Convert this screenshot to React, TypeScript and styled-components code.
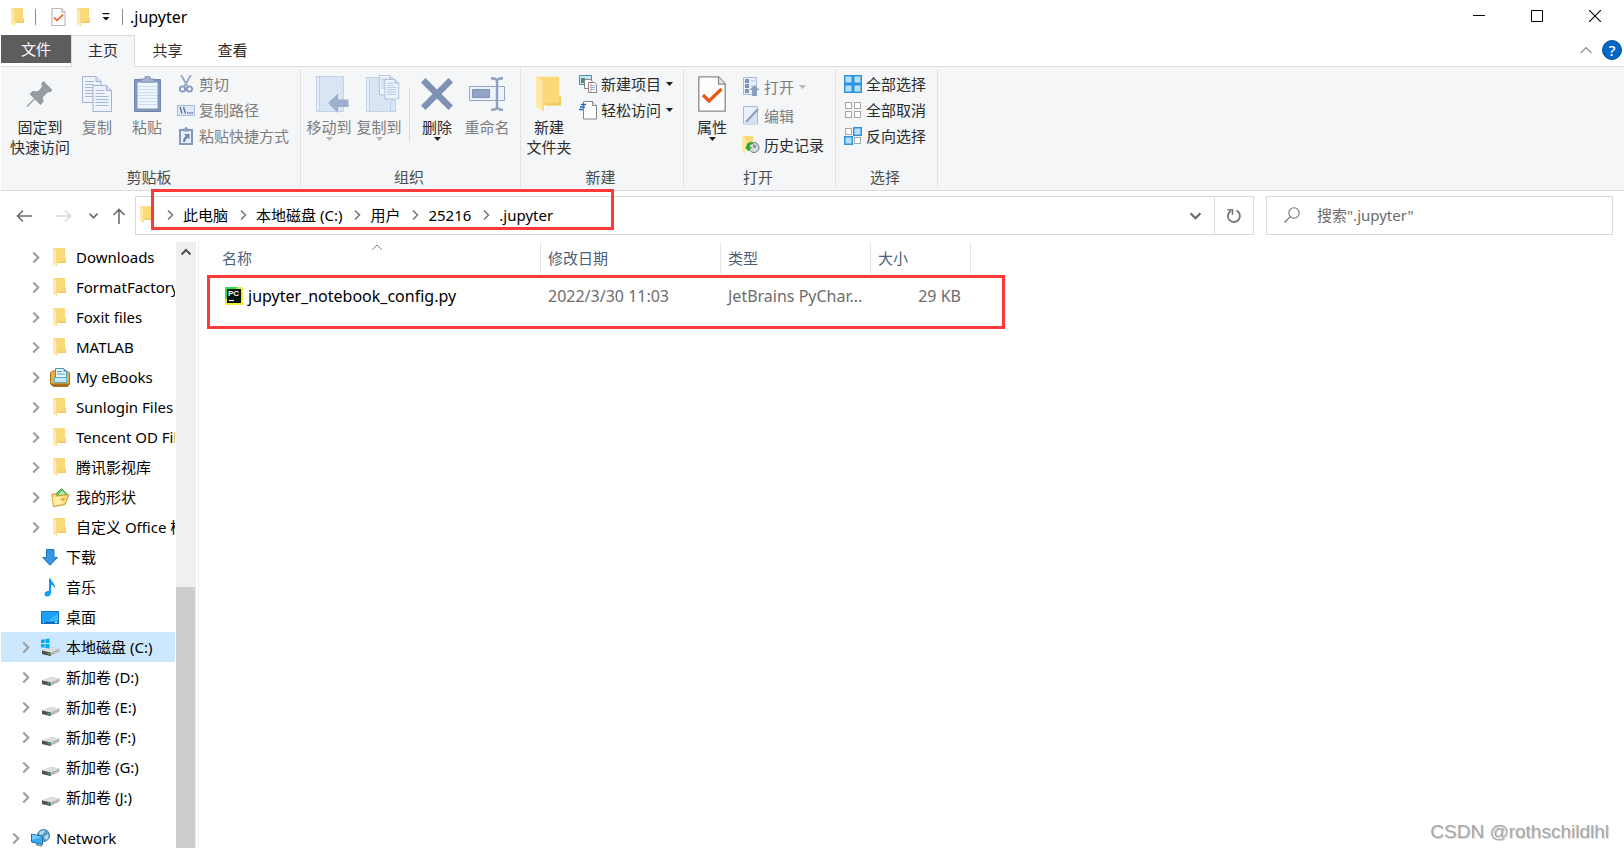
import React from 'react';
import styled, { createGlobalStyle, css } from 'styled-components';

const GlobalStyle = createGlobalStyle`
  *, *::before, *::after { box-sizing: border-box; }
  html, body { margin: 0; padding: 0; background: #fff; }
  body, button, input, table {
    font-family: 'Noto Sans', 'Noto Sans CJK SC', sans-serif;
    font-size: 15px;
    line-height: 20px;
    color: #000;
  }
  button { border: 0; padding: 0; margin: 0; background: transparent; cursor: default; }
  svg { display: block; flex: none; }
`;

const Window = styled.div`
  display: flex;
  flex-direction: column;
  height: 100vh;
  min-width: 1100px;
  overflow: hidden;
  position: relative;
`;

/* Title bar */

const TitleBar = styled.header`
  display: flex;
  align-items: flex-start;
  justify-content: space-between;
  height: 35px;
  flex: none;
  padding-left: 11px;
`;

const QuickAccess = styled.div`
  display: flex;
  align-items: center;
  height: 33px;
`;

const QuickButton = styled.button<{ $gap?: number }>`
  display: flex;
  margin-right: ${p => p.$gap ?? 0}px;
`;

const Separator = styled.span<{ $gap: number }>`
  width: 1px;
  height: 16px;
  background: #8a8a8a;
  margin-right: ${p => p.$gap}px;
`;

const WindowTitle = styled.h1`
  margin: 0;
  font-size: 16px;
  font-weight: 400;
  line-height: 20px;
`;

const WindowControls = styled.div`
  display: flex;
  align-self: stretch;
`;

const ControlButton = styled.button`
  width: 58px;
  height: 32px;
  display: flex;
  align-items: center;
  justify-content: center;
`;

/* Tabs */

const TabBar = styled.nav`
  display: flex;
  align-items: flex-start;
  height: 31px;
  flex: none;
  padding-left: 1px;
`;

const Tab = styled.button<{ $kind?: 'file' | 'active' }>`
  width: 65px;
  height: 30px;
  color: #2b2b2b;
  ${p => p.$kind === 'file' && css`
    width: 70px;
    height: 28px;
    color: #fff;
    background: #5d5d5d;
  `}
  ${p => p.$kind === 'active' && css`
    width: 64px;
    height: 32px;
    padding-bottom: 4px;
    background: #f4f6f8;
    border: 1px solid #dadbdc;
    border-bottom: 0;
    position: relative;
    z-index: 1;
  `}
`;

const TabTools = styled.div`
  display: flex;
  align-items: center;
  gap: 10px;
  height: 30px;
  margin-left: auto;
  padding-right: 2px;
`;

const HelpButton = styled.button`
  width: 20px;
  height: 20px;
  border-radius: 50%;
  background: #0067c9;
  border: 1px solid #0a4f97;
  color: #fff;
  font-weight: 500;
  line-height: 18px;
`;

/* Ribbon */

const Ribbon = styled.section`
  display: flex;
  flex: none;
  height: 125px;
  margin-left: 1px;
  background: #f4f6f8;
  border-top: 1px solid #dadbdc;
  border-bottom: 1px solid #dadbdc;
`;

const Group = styled.section<{ $width: number }>`
  display: flex;
  flex-direction: column;
  justify-content: space-between;
  width: ${p => p.$width}px;
  margin: 2px 0;
  border-right: 1px solid #e0e2e4;
`;

const GroupBody = styled.div<{ $indent: number }>`
  display: flex;
  align-items: flex-start;
  padding-left: ${p => p.$indent}px;
`;

const GroupLabel = styled.h2`
  margin: 0 0 1px;
  padding-right: 3px;
  font-size: 15px;
  font-weight: 400;
  line-height: 20px;
  color: #4c4c4c;
  text-align: center;
`;

const LargeButton = styled.button<{ $width?: number }>`
  display: flex;
  flex-direction: column;
  align-items: center;
  width: ${p => p.$width ?? 50}px;
  padding-top: 7px;
  white-space: nowrap;
  color: #2b2b2b;
  &:disabled { color: #7d7d7d; }
`;

const LargeIcon = styled.span`
  display: flex;
  align-items: center;
  justify-content: center;
  height: 36px;
  margin-bottom: 5px;
`;

const GroupDivider = styled.span`
  width: 1px;
  height: 54px;
  margin: 19px 2px 0 5px;
  background: #dcdee0;
`;

const SmallColumn = styled.div<{ $pitch?: number; $top?: number }>`
  display: grid;
  grid-auto-rows: ${p => p.$pitch ?? 26}px;
  padding-top: ${p => p.$top ?? 2}px;
  margin-left: 4px;
`;

const SmallButton = styled.button`
  display: flex;
  align-items: center;
  gap: 3px;
  white-space: nowrap;
  color: #2b2b2b;
  &:disabled { color: #7d7d7d; }
`;

const SmallIcon = styled.span`
  display: flex;
  justify-content: center;
  width: 20px;
`;

const SmallLabel = styled.span`
  margin-right: 2px;
`;

/* Navigation row */

const NavRow = styled.div`
  display: flex;
  align-items: center;
  flex: none;
  height: 39px;
  margin: 5px 11px 7px 0;
`;

const NavButtons = styled.div`
  display: flex;
  align-items: center;
  width: 135px;
  padding-left: 16px;
`;

const NavButton = styled.button<{ $width: number }>`
  display: flex;
  width: ${p => p.$width}px;
`;

const AddressBar = styled.div`
  display: flex;
  flex: 1;
  height: 39px;
  border: 1px solid #d9d9d9;
`;

const Breadcrumb = styled.nav`
  display: flex;
  align-items: center;
  flex: 1;
  padding: 0 0 2px 4px;
  gap: 4px;
`;

const CrumbTrail = styled.div`
  display: flex;
  align-items: center;
  position: relative;
  padding-left: 8px;
  &::after {
    content: '';
    position: absolute;
    left: -6px;
    top: -16px;
    width: 463px;
    height: 41px;
    border: 3px solid #fd3939;
    pointer-events: none;
  }
`;

const Crumb = styled.a`
  color: #000;
  text-decoration: none;
  margin: 0 10px 0 8px;
  white-space: nowrap;
`;

const AddressButton = styled.button<{ $divided?: boolean }>`
  width: 38px;
  display: flex;
  align-items: center;
  justify-content: center;
  ${p => p.$divided && css`
    width: 39px;
    border-left: 1px solid #d9d9d9;
  `}
`;

const SearchBox = styled.label`
  display: flex;
  align-items: center;
  gap: 17px;
  width: 347px;
  height: 39px;
  margin-left: 12px;
  padding: 0 0 2px 17px;
  border: 1px solid #d9d9d9;
`;

const SearchInput = styled.input`
  flex: 1;
  min-width: 0;
  border: 0;
  padding: 0;
  outline: 0;
  background: transparent;
  &::placeholder { color: #6d6d6d; opacity: 1; }
`;

/* Main area */

const Main = styled.main`
  display: flex;
  flex: 1;
  min-height: 0;
`;

const Tree = styled.ul`
  width: 174px;
  margin: 0 1px;
  padding: 0;
  list-style: none;
  overflow: hidden;
`;

const TreeItem = styled.li<{ $level: number; $selected?: boolean; $spaced?: boolean }>`
  height: 30px;
  margin-top: ${p => (p.$spaced ? 11 : 0)}px;
  padding-left: ${p => 9 + p.$level * 10}px;
  background: ${p => (p.$selected ? '#cce8ff' : 'transparent')};
  overflow: hidden;
`;

const TreeButton = styled.button`
  display: flex;
  align-items: center;
  height: 30px;
  white-space: nowrap;
`;

const TreeChevron = styled.span`
  display: flex;
  width: 20px;
`;

const TreeIcon = styled.span`
  display: flex;
  align-items: center;
  justify-content: center;
  width: 20px;
  margin-right: 6px;
`;

const ScrollTrack = styled.div`
  display: flex;
  flex-direction: column;
  width: 20px;
  background: #f0f0f0;
  margin-right: 2px;
`;

const ScrollUp = styled.button`
  display: flex;
  align-items: center;
  justify-content: center;
  height: 20px;
  flex: none;
`;

const ScrollGap = styled.div`
  flex: 325;
`;

const ScrollThumb = styled.div`
  flex: 261;
  background: #cdcdcd;
  margin-right: 1px;
`;

const FilePane = styled.section`
  flex: 1;
  border-left: 1px solid #f0f0f0;
  padding-left: 8px;
`;

const FileList = styled.div`
  position: relative;
  width: 800px;
`;

const Highlight = styled.div`
  position: absolute;
  left: 0;
  top: 33px;
  width: 798px;
  height: 54px;
  border: 3px solid #fd3939;
  pointer-events: none;
`;

const FileTable = styled.table`
  table-layout: fixed;
  border-collapse: separate;
  border-spacing: 0;
  width: 764px;
`;

const HeadCell = styled.th`
  position: relative;
  height: 32px;
  padding: 0 0 0 7px;
  border-right: 1px solid #e5e5e5;
  text-align: left;
  font-weight: 400;
  &:first-child { padding-left: 15px; }
`;

const HeadButton = styled.button`
  color: #4c607a;
`;

const SortMark = styled.span`
  position: absolute;
  left: 165px;
  top: 0;
`;

const Cell = styled.td<{ $align?: 'right' }>`
  height: 44px;
  padding: 0 10px 0 7px;
  font-size: 16px;
  color: #6d6d6d;
  text-align: ${p => p.$align ?? 'left'};
  white-space: nowrap;
  &:first-child { padding-right: 0; }
`;

const FileName = styled.span`
  display: flex;
  align-items: center;
  gap: 5px;
  padding-left: 11px;
  color: #000;
`;

const Watermark = styled.div`
  position: absolute;
  right: 15px;
  bottom: 5px;
  font-family: 'Liberation Sans', sans-serif;
  font-size: 19px;
  line-height: 22px;
  color: #a6a6a6;
  text-shadow: 1px 1px 0 #dcdcdc;
`;

/* Icons */

const FolderIcon = ({ w = 14, h = 18 }: { w?: number; h?: number }) => (
  <svg width={w} height={h} viewBox="0 0 14 18">
    <path d="M0 0h12v10l1 .5V15H4L0 14z" fill="#f9d978" />
    <path d="M12 10l1 .5V15H5v-1.500h7z" fill="#f1cb63" />
    <path d="M0 0l4 2.500V18l-4-2z" fill="#ffe9a8" />
    <path d="M3.300 2.100l.7.4V18l-.7-.4z" fill="#f5d67e" />
  </svg>
);

const CheckDocIcon = ({ w = 15, h = 18 }: { w?: number; h?: number }) => (
  <svg width={w} height={h} viewBox="0 0 28 36">
    <path d="M.8.800h20l6.400 7v27.400H.8z" fill="#fdfdfd" stroke="#8b8b8b" strokeWidth="1.300" />
    <path d="M20.500 1v7.200H27" fill="#e4e4e4" stroke="#8b8b8b" strokeWidth="1.200" />
    <path d="M5 19l6 6L23.500 13" fill="none" stroke="#ec5613" strokeWidth="3.200" />
  </svg>
);

const Caret = ({ color = '#1f1f1f' }: { color?: string }) => (
  <svg width="7" height="4" viewBox="0 0 7 4"><path d="M0 0h7L3.500 4z" fill={color} /></svg>
);

const QuickCaret = () => (
  <svg width="8" height="8" viewBox="0 0 8 8"><path d="M0.500 0h7v1.300h-7zM.5 4h7L4 7.500z" fill="#111" /></svg>
);

const Chevron = ({ dir = 'right', size = 10, color = '#a0a0a0', weight = 2 }:
  { dir?: 'right' | 'down' | 'up'; size?: number; color?: string; weight?: number }) => {
  const d = { right: 'M3 0.500L7.500 5L3 9.500', down: 'M.5 3L5 7.500L9.500 3', up: 'M.5 7.500L5 3L9.500 7.500' }[dir];
  return <svg width={size} height={size} viewBox="0 0 10 10"><path d={d} fill="none" stroke={color} strokeWidth={weight} /></svg>;
};

const PinIcon = () => (
  <svg width="28" height="28" viewBox="0 0 28 28">
    <path d="M17.500 1l9 9-2.500 2.500-1.800-.6-5.200 5 .4 5-3 3-5.500-5.500L2 26.500.8 27 1 25.500l7-7L3.500 14l3-3 5.500.3 4-4.500-.8-3.300z" fill="#949ca3" />
  </svg>
);

const docPage = (x: number, y: number, lines = 6) => (
  <g transform={`translate(${x} ${y})`}>
    <path d="M.5.500h13.500l5 5v21H.5z" fill="#eff4fc" stroke="#9fb2d2" />
    <path d="M14 .5v5h5" fill="#d5e0f1" stroke="#9fb2d2" />
    {Array.from({ length: lines }, (_, i) => (
      <path key={i} d={`M3 ${5.500 + i * 3}h${i < 2 ? 9 : 13}`} stroke="#a5b8d8" />
    ))}
  </g>
);

const CopyIcon = () => (
  <svg width="31" height="36" viewBox="0 0 31 36">{docPage(0, 0)}{docPage(10.500, 9)}</svg>
);

const PasteIcon = () => (
  <svg width="27" height="36" viewBox="0 0 27 36">
    <path d="M.5 3.500h26v32H.5z" fill="#8196bb" stroke="#7187ae" />
    <path d="M3.500 6.500h20v26h-20z" fill="#eff5fd" />
    <path d="M7 6V3h3.500a3 3 0 0 1 6 0H20v3z" fill="#a4b3ce" stroke="#8195b8" />
    {[10, 13, 16, 19, 22, 25, 28].map(y => <path key={y} d={`M4 ${y}.500h19`} stroke="#cfdcef" />)}
  </svg>
);

const CutIcon = () => (
  <svg width="14" height="18" viewBox="0 0 14 18">
    <path d="M2 0l6.500 11M12 0L5.500 11" stroke="#9aabc8" strokeWidth="2" fill="none" />
    <circle cx="3.500" cy="14" r="2.700" fill="none" stroke="#8497bb" strokeWidth="1.800" />
    <circle cx="10.500" cy="14" r="2.700" fill="none" stroke="#8497bb" strokeWidth="1.800" />
  </svg>
);

const PathIcon = () => (
  <svg width="18" height="11" viewBox="0 0 18 11">
    <path d="M.5.500h17v10H.5z" fill="#dfe8f5" stroke="#a9bad6" />
    <path d="M3 2l2 6.500M6.500 2l2 6.500M10 8h1.500M12.300 8h1.500M14.500 8H16" stroke="#566f9e" strokeWidth="1.300" />
  </svg>
);

const PasteLinkIcon = () => (
  <svg width="14" height="18" viewBox="0 0 14 18">
    <path d="M1 3h12v14H1z" fill="#e9f0fa" stroke="#8497bb" strokeWidth="2" />
    <path d="M4 1.500h6v3H4zM6 0h2v2H6z" fill="#8c9dbe" />
    <path d="M5 7h5.500v5.500L8.800 10.800C7 11.800 6.500 13 6.300 15H4c0-3 1-5 3-6z" fill="#6f86b3" />
  </svg>
);

const MoveIcon = () => (
  <svg width="42" height="38" viewBox="-8 0 42 38">
    <path d="M.5 1.500h27v35H.5z" fill="#dae5f4" stroke="#c3d2e8" />
    <path d="M.5 1.500l3 1v33l-3 1z" fill="#e8effa" stroke="#c3d2e8" />
    <path d="M12 28L22 18.500V24.500H32.500V32H22V38z" fill="#9dafcc" />
  </svg>
);

const CopyToIcon = () => (
  <svg width="42" height="38" viewBox="-8 0 42 38">
    <path d="M.5 2.500h26v34H.5z" fill="#dae5f4" stroke="#c3d2e8" />
    <path d="M.5 2.500l3 1v32l-3 1z" fill="#e8effa" stroke="#c3d2e8" />
    <path d="M26.500 25.500h3v11h-5v-9z" fill="#dae5f4" stroke="#c3d2e8" />
    <g transform="translate(13 0) scale(.75)">{docPage(0, 0, 5)}</g>
    <g transform="translate(18.500 4) scale(.75)">{docPage(0, 0)}</g>
  </svg>
);

const DeleteIcon = () => (
  <svg width="32" height="32" viewBox="0 0 32 32">
    <path d="M4.500 0L16 11.500 27.500 0 32 4.500 20.500 16 32 27.500 27.500 32 16 20.500 4.500 32 0 27.500 11.500 16 0 4.500z" fill="#8092b3" />
  </svg>
);

const RenameIcon = () => (
  <svg width="37" height="34" viewBox="0 0 37 34">
    <path d="M.5 9.500h35v14H.5z" fill="#edf3fb" stroke="#93a7ca" />
    <path d="M3.500 12.500h17v8h-17z" fill="#92a5c6" stroke="#7e93b9" />
    <path d="M22 1.200c4 0 6 1 6 3v25.500c0 2-2 3-6 3M34 1.200c-4 0-6 1-6 3v25.500c0 2 2 3 6 3" fill="none" stroke="#8ea0c0" strokeWidth="2.400" />
  </svg>
);

const NewItemIcon = () => (
  <svg width="18" height="18" viewBox="0 0 18 18">
    <path d="M.5.500h12v9H.5z" fill="#c9e8f5" stroke="#4d8fae" />
    <path d="M2 3h4v5H2z" fill="#4b8a7c" />
    <path d="M5.500 4.500h6l2 2v7h-8z" fill="#fff" stroke="#858585" />
    <path d="M9.500 7.500h6l2 2v8h-8z" fill="#fff" stroke="#858585" />
    <path d="M11 10.500h5M11 12.500h5M11 14.500h5" stroke="#8fb1e0" />
    <path d="M12 9v8" stroke="#ee9c9c" />
  </svg>
);

const EasyAccessIcon = () => (
  <svg width="18" height="19" viewBox="0 0 18 19">
    <path d="M4.500.500h9l4 4v13.500h-13z" fill="#fff" stroke="#858585" />
    <path d="M13.500.500v4h4" fill="#eee" stroke="#858585" />
    <path d="M2 3.500h5M1 6h5M0 8.500h4" stroke="#2268b2" strokeWidth="1.300" />
  </svg>
);

const OpenIcon = () => (
  <svg width="17" height="19" viewBox="0 0 17 19">
    <path d="M.5.500h13v17H.5z" fill="#e9f0fa" stroke="#a9bad6" />
    <path d="M2.500 2.500h3v3h-3zM2.500 7.500h3v3h-3zM2.500 12.500h3v3h-3z" fill="#8ba0c6" stroke="#7088b3" />
    <path d="M8 4h4M8 9h3" stroke="#a9bad6" />
    <path d="M11.500 8l5 5h-2.500v6h-5v-6H6.500z" fill="#8b9fc1" />
  </svg>
);

const EditIcon = () => (
  <svg width="16" height="19" viewBox="0 0 16 19">
    <path d="M.5.500h14v17.500H.5z" fill="#e9f0fa" stroke="#a9bad6" />
    <path d="M1 18L14 4v14z" fill="#d6e1f1" />
    <path d="M3 16L15 3" stroke="#8b9fc1" strokeWidth="2" />
  </svg>
);

const HistoryIcon = () => (
  <svg width="18" height="19" viewBox="0 0 18 19">
    <path d="M0 1h11v14H4z" fill="#f9d978" />
    <path d="M0 1l4 3v14l-4-2z" fill="#ffe9a8" />
    <circle cx="12" cy="12.500" r="5" fill="#d7dadc" stroke="#777c80" />
    <path d="M12 9.500v3l2.500-2" fill="none" stroke="#5b5f62" />
    <path d="M10 7C5.500 7 4 10 4.500 12H3l3.500 4.500L10 12H7.500c0-1.500 1-3 4-3z" fill="#2fa53c" />
  </svg>
);

const SelectIcon = ({ filled }: { filled: boolean[] }) => (
  <svg width="18" height="18" viewBox="0 0 18 18">
    {filled.map((on, i) => {
      const x = (i % 2) * 9;
      const y = Math.floor(i / 2) * 9;
      return on
        ? <rect key={i} x={x + 0.75} y={y + 0.75} width="7.500" height="7.500" fill="#b9e0fb" stroke="#2f93e0" strokeWidth="1.500" />
        : <rect key={i} x={x + 1.500} y={y + 1.500} width="6" height="6" fill="#fff" stroke="#a6a6a6" />;
    })}
  </svg>
);

const ArrowIcon = ({ dir, color }: { dir: 'left' | 'right' | 'up'; color: string }) => {
  const angle = { left: 0, right: 180, up: 90 }[dir];
  return (
    <svg width="16" height="16" viewBox="0 0 16 16">
      <path transform={`rotate(${angle} 8 8)`} d="M16 8H1.500M7 2.500L1.500 8 7 13.500" fill="none" stroke={color} strokeWidth="1.600" />
    </svg>
  );
};

const RefreshIcon = () => (
  <svg width="16" height="16" viewBox="0 0 16 16">
    <path d="M10.500 2.600a6 6 0 1 1-5.500.2" fill="none" stroke="#757575" strokeWidth="1.800" />
    <path d="M1.500 1.800h5v5" fill="none" stroke="#757575" strokeWidth="1.600" />
  </svg>
);

const SearchIcon = () => (
  <svg width="16" height="16" viewBox="0 0 16 16">
    <circle cx="10" cy="6" r="5.200" fill="none" stroke="#757575" strokeWidth="1.100" />
    <path d="M6.300 9.700L.5 15.500" stroke="#757575" strokeWidth="1.200" />
  </svg>
);

const EbookIcon = () => (
  <svg width="20" height="19" viewBox="0 0 20 19">
    <path d="M.5 5l2-2h14l3 2v11l-2 2.500h-14L.5 16z" fill="#e8b04a" stroke="#a56d14" />
    <path d="M5.500.500h8l3 3V14h-11z" fill="#eaf7fd" stroke="#4593bb" />
    <path d="M13.500.500v3h3" fill="#2d87c8" />
    <path d="M7 3.500h5M7 6h8" stroke="#4d9fcb" />
    <path d="M4.500 9.500h12v5h-12z" fill="#c6e9f7" stroke="#5fa9c9" />
    <path d="M1 15.500h18V17l-1.500 1.500h-14L1 17z" fill="#aa6f1c" />
  </svg>
);

const ShapesIcon = () => (
  <svg width="19" height="19" viewBox="0 0 19 19">
    <path d="M4 7l6.500-6.500L17 7l-5 5z" fill="#6cc66a" stroke="#3f9f46" />
    <path d="M8 6l3-3 3 3-3 3z" fill="#b6ecae" />
    <path d="M.8 6.500l3.200-1 2 2.500 12-1.500-4 10L2.500 18.500z" fill="#f6da72" stroke="#c79c32" />
    <path d="M1.500 9L15 8.500l-3 7L3 17.500z" fill="#ffeda0" />
    <path d="M9 10.500l6-1-3 4z" fill="#f0a63d" />
  </svg>
);

const DownloadIcon = () => (
  <svg width="16" height="17" viewBox="0 0 16 17">
    <path d="M4.500.500h7.500v8h3.500L8 16.300.8 8.500h3.700z" fill="#3595e6" stroke="#2271b9" />
  </svg>
);

const MusicIcon = () => (
  <svg width="12" height="19" viewBox="0 0 12 19">
    <path d="M5 .5h1.700c.3 3.500 5.300 5 4.300 10.500-.3-2.500-2-3.700-4-4.300v8.300c0 2-1.700 3.500-3.700 3.500S.3 17 .6 15.400C1 13.500 3.200 12.600 5 13.100z" fill="#0f9bf5" />
  </svg>
);

const DesktopIcon = () => (
  <svg width="18" height="13" viewBox="0 0 18 13">
    <path d="M.5.500h17v12H.5z" fill="#1ba1fa" stroke="#0b73c1" />
    <path d="M7 10L17 2v8z" fill="#3fb4ff" />
    <path d="M1 11h16v1H1z" fill="#0b63ad" />
    <path d="M2 11.500h1M14 11.500h2" stroke="#fff" />
  </svg>
);

const DriveIcon = ({ system }: { system?: boolean }) => (
  <svg width="19" height="19" viewBox="0 0 19 19">
    <path d="M1 12.500l9-3.500 8.500 1.500v3L9.500 18 1 16z" fill="#b5b7b9" />
    <path d="M1 12.500L10 9l8.500 1.500-9 4z" fill="#dddedf" />
    <path d="M1 12.500l8.500 2V18L1 16z" fill="#4c4f51" />
    <path d="M6.500 15.500l1.500.4" stroke="#3ddc4e" strokeWidth="1.300" />
    {system && (
      <>
        <path d="M0 0h8.500v10.500H0z" fill="#cce8ff" />
        <path d="M0 1.800l3.600-.6v3.900H0zM4.400 1.100L8.500.500v4.600H4.400zM0 6h3.600v3.800L0 9.200zM4.400 6h4.100v4.500l-4.100-.6z" fill="#00adef" />
      </>
    )}
  </svg>
);

const NetworkIcon = () => (
  <svg width="19" height="18" viewBox="0 0 19 18">
    <circle cx="12.500" cy="6.500" r="6" fill="#5b9fc6" stroke="#3d7ea8" />
    <path d="M8 4c2-3 5-3 6-2l-2 3-3 1zM13 8l4-3c1 3 0 5-2 6z" fill="#b9ddeb" />
    <path d="M.5 5l11 2.500v8L.5 13z" fill="#38a9f2" stroke="#1c6aa8" />
    <path d="M1 5.500L11 8 1 11z" fill="#74c9fb" />
    <path d="M5 15.500l6 1.500" stroke="#7d8a93" strokeWidth="1.400" />
  </svg>
);

const PyCharmIcon = () => (
  <svg width="18" height="18" viewBox="0 0 18 18" aria-hidden="true">
    <path d="M0 0h17l1 2v16H1L0 16z" fill="#e9ef3c" />
    <path d="M0 0h13L0 13z" fill="#2fdf4f" />
    <path d="M2 2h14v14H2z" fill="#04110a" />
    <text x="3" y="8.500" fontFamily="Liberation Sans, sans-serif" fontSize="8" fontWeight="700" fill="#fff">PC</text>
    <path d="M4 13.500h5" stroke="#fff" strokeWidth="1.200" />
  </svg>
);

/* Data */

type Item = { label: string; level: number; icon: React.ReactNode; leaf?: boolean; selected?: boolean; spaced?: boolean };

const folder = <FolderIcon />;

const treeItems: Item[] = [
  { label: 'Downloads', level: 2, icon: folder },
  { label: 'FormatFactory', level: 2, icon: folder },
  { label: 'Foxit files', level: 2, icon: folder },
  { label: 'MATLAB', level: 2, icon: folder },
  { label: 'My eBooks', level: 2, icon: <EbookIcon /> },
  { label: 'Sunlogin Files', level: 2, icon: folder },
  { label: 'Tencent OD Files', level: 2, icon: folder },
  { label: '腾讯影视库', level: 2, icon: folder },
  { label: '我的形状', level: 2, icon: <ShapesIcon /> },
  { label: '自定义 Office 模板', level: 2, icon: folder },
  { label: '下载', level: 1, icon: <DownloadIcon />, leaf: true },
  { label: '音乐', level: 1, icon: <MusicIcon />, leaf: true },
  { label: '桌面', level: 1, icon: <DesktopIcon />, leaf: true },
  { label: '本地磁盘 (C:)', level: 1, icon: <DriveIcon system />, selected: true },
  { label: '新加卷 (D:)', level: 1, icon: <DriveIcon /> },
  { label: '新加卷 (E:)', level: 1, icon: <DriveIcon /> },
  { label: '新加卷 (F:)', level: 1, icon: <DriveIcon /> },
  { label: '新加卷 (G:)', level: 1, icon: <DriveIcon /> },
  { label: '新加卷 (J:)', level: 1, icon: <DriveIcon /> },
  { label: 'Network', level: 0, icon: <NetworkIcon />, spaced: true },
];

const crumbs = ['此电脑', '本地磁盘 (C:)', '用户', '25216', '.jupyter'];

const Large = ({ icon, lines, width, disabled, caret }:
  { icon: React.ReactNode; lines: string[]; width?: number; disabled?: boolean; caret?: boolean }) => (
  <LargeButton $width={width} disabled={disabled}>
    <LargeIcon>{icon}</LargeIcon>
    {lines.map(line => <span key={line}>{line}</span>)}
    {caret && <Caret color={disabled ? '#b5b5b5' : undefined} />}
  </LargeButton>
);

const Small = ({ icon, label, disabled, caret }:
  { icon: React.ReactNode; label: string; disabled?: boolean; caret?: boolean }) => (
  <SmallButton disabled={disabled}>
    <SmallIcon>{icon}</SmallIcon>
    <SmallLabel>{label}</SmallLabel>
    {caret && <Caret color={disabled ? '#b5b5b5' : undefined} />}
  </SmallButton>
);

export default function App() {
  return (
    <>
      <GlobalStyle />
      <Window>
        <TitleBar>
          <QuickAccess>
            <QuickButton $gap={10} aria-label="窗口菜单"><FolderIcon /></QuickButton>
            <Separator $gap={15} />
            <QuickButton $gap={11} aria-label="属性"><CheckDocIcon /></QuickButton>
            <QuickButton $gap={11} aria-label="新建文件夹"><FolderIcon /></QuickButton>
            <QuickButton $gap={12} aria-label="自定义快速访问工具栏"><QuickCaret /></QuickButton>
            <Separator $gap={7} />
            <WindowTitle>.jupyter</WindowTitle>
          </QuickAccess>
          <WindowControls>
            <ControlButton aria-label="最小化">
              <svg width="12" height="12" viewBox="0 0 12 12"><path d="M0 5.500h12" stroke="#000" /></svg>
            </ControlButton>
            <ControlButton aria-label="最大化">
              <svg width="12" height="12" viewBox="0 0 12 12"><path d="M.5.500h11v11H.5z" fill="none" stroke="#000" /></svg>
            </ControlButton>
            <ControlButton aria-label="关闭">
              <svg width="12" height="12" viewBox="0 0 12 12"><path d="M0 0l12 12M12 0L0 12" stroke="#000" strokeWidth="1.100" /></svg>
            </ControlButton>
          </WindowControls>
        </TitleBar>

        <TabBar>
          <Tab $kind="file">文件</Tab>
          <Tab $kind="active">主页</Tab>
          <Tab>共享</Tab>
          <Tab>查看</Tab>
          <TabTools>
            <QuickButton aria-label="折叠功能区"><Chevron dir="up" size={12} color="#8c8c8c" weight={1} /></QuickButton>
            <HelpButton aria-label="帮助">?</HelpButton>
          </TabTools>
        </TabBar>

        <Ribbon>
          <Group $width={300}>
            <GroupBody $indent={7}>
              <Large icon={<PinIcon />} lines={['固定到', '快速访问']} width={64} />
              <Large icon={<CopyIcon />} lines={['复制']} disabled />
              <Large icon={<PasteIcon />} lines={['粘贴']} disabled />
              <SmallColumn>
                <Small icon={<CutIcon />} label="剪切" disabled />
                <Small icon={<PathIcon />} label="复制路径" disabled />
                <Small icon={<PasteLinkIcon />} label="粘贴快捷方式" disabled />
              </SmallColumn>
            </GroupBody>
            <GroupLabel>剪贴板</GroupLabel>
          </Group>
          <Group $width={220}>
            <GroupBody $indent={3}>
              <Large icon={<MoveIcon />} lines={['移动到']} disabled caret />
              <Large icon={<CopyToIcon />} lines={['复制到']} disabled caret />
              <GroupDivider />
              <Large icon={<DeleteIcon />} lines={['删除']} caret />
              <Large icon={<RenameIcon />} lines={['重命名']} disabled />
            </GroupBody>
            <GroupLabel>组织</GroupLabel>
          </Group>
          <Group $width={163}>
            <GroupBody $indent={3}>
              <Large icon={<FolderIcon w={27} h={36} />} lines={['新建', '文件夹']} />
              <SmallColumn>
                <Small icon={<NewItemIcon />} label="新建项目" caret />
                <Small icon={<EasyAccessIcon />} label="轻松访问" caret />
              </SmallColumn>
            </GroupBody>
            <GroupLabel>新建</GroupLabel>
          </Group>
          <Group $width={152}>
            <GroupBody $indent={3}>
              <Large icon={<CheckDocIcon w={28} h={36} />} lines={['属性']} caret />
              <SmallColumn $pitch={29} $top={3}>
                <Small icon={<OpenIcon />} label="打开" disabled caret />
                <Small icon={<EditIcon />} label="编辑" disabled />
                <Small icon={<HistoryIcon />} label="历史记录" />
              </SmallColumn>
            </GroupBody>
            <GroupLabel>打开</GroupLabel>
          </Group>
          <Group $width={102}>
            <GroupBody $indent={3}>
              <SmallColumn>
                <Small icon={<SelectIcon filled={[true, true, true, true]} />} label="全部选择" />
                <Small icon={<SelectIcon filled={[false, false, false, false]} />} label="全部取消" />
                <Small icon={<SelectIcon filled={[false, true, true, false]} />} label="反向选择" />
              </SmallColumn>
            </GroupBody>
            <GroupLabel>选择</GroupLabel>
          </Group>
        </Ribbon>

        <NavRow>
          <NavButtons>
            <NavButton $width={40} aria-label="后退"><ArrowIcon dir="left" color="#6b6b6b" /></NavButton>
            <NavButton $width={33} aria-label="前进"><ArrowIcon dir="right" color="#d8d8d8" /></NavButton>
            <NavButton $width={22} aria-label="最近浏览的位置"><Chevron dir="down" size={9} color="#757575" /></NavButton>
            <NavButton $width={16} aria-label="上移"><ArrowIcon dir="up" color="#6b6b6b" /></NavButton>
          </NavButtons>
          <AddressBar>
            <Breadcrumb aria-label="地址">
              <FolderIcon w={13} h={17} />
              <CrumbTrail>
                {crumbs.map(c => (
                  <React.Fragment key={c}>
                    <Chevron color="#757575" weight={1.500} />
                    <Crumb href="#">{c}</Crumb>
                  </React.Fragment>
                ))}
              </CrumbTrail>
            </Breadcrumb>
            <AddressButton aria-label="历史位置"><Chevron dir="down" size={11} color="#6b6b6b" /></AddressButton>
            <AddressButton $divided aria-label="刷新"><RefreshIcon /></AddressButton>
          </AddressBar>
          <SearchBox>
            <SearchIcon />
            <SearchInput type="text" aria-label="搜索" placeholder={'搜索".jupyter"'} />
          </SearchBox>
        </NavRow>

        <Main>
          <Tree>
            {treeItems.map(item => (
              <TreeItem key={item.label} $level={item.level} $selected={item.selected} $spaced={item.spaced}>
                <TreeButton>
                  <TreeChevron>{!item.leaf && <Chevron size={11} />}</TreeChevron>
                  <TreeIcon>{item.icon}</TreeIcon>
                  {item.label}
                </TreeButton>
              </TreeItem>
            ))}
          </Tree>
          <ScrollTrack>
            <ScrollUp aria-label="向上滚动"><Chevron dir="up" size={10} color="#505050" /></ScrollUp>
            <ScrollGap />
            <ScrollThumb />
          </ScrollTrack>
          <FilePane>
            <FileList>
              <FileTable>
                <colgroup>
                  <col style={{ width: 334 }} />
                  <col style={{ width: 180 }} />
                  <col style={{ width: 150 }} />
                  <col style={{ width: 100 }} />
                </colgroup>
                <thead>
                  <tr>
                    <HeadCell scope="col">
                      <HeadButton>名称</HeadButton>
                      <SortMark><Chevron dir="up" size={10} color="#757575" weight={1} /></SortMark>
                    </HeadCell>
                    <HeadCell scope="col"><HeadButton>修改日期</HeadButton></HeadCell>
                    <HeadCell scope="col"><HeadButton>类型</HeadButton></HeadCell>
                    <HeadCell scope="col"><HeadButton>大小</HeadButton></HeadCell>
                  </tr>
                </thead>
                <tbody>
                  <tr>
                    <Cell><FileName><PyCharmIcon />jupyter_notebook_config.py</FileName></Cell>
                    <Cell>2022/3/30 11:03</Cell>
                    <Cell>JetBrains PyChar...</Cell>
                    <Cell $align="right">29 KB</Cell>
                  </tr>
                </tbody>
              </FileTable>
              <Highlight />
            </FileList>
          </FilePane>
        </Main>
        <Watermark>CSDN @rothschildlhl</Watermark>
      </Window>
    </>
  );
}
